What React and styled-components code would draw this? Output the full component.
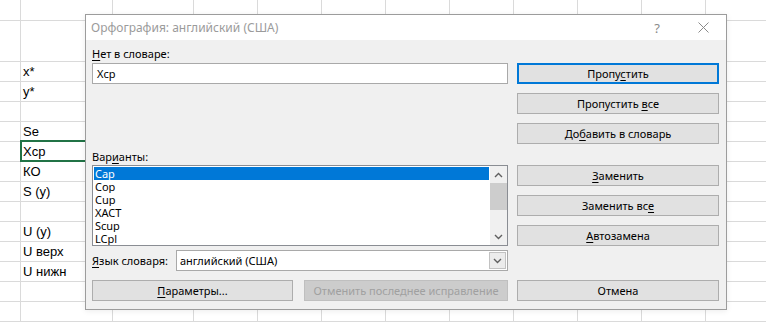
import React from "react";
import styled, { createGlobalStyle, css } from "styled-components";

const Global = createGlobalStyle`
  html, body { margin: 0; padding: 0; background: #fff; }
  body { width: 766px; height: 322px; overflow: hidden; }
`;

const Stage = styled.div`
  position: relative;
  width: 766px;
  height: 322px;
  overflow: hidden;
  background: #fff;
`;

const Sheet = styled.div`
  display: grid;
  grid-template-columns: 21px 92px 81px repeat(9, 64px);
  grid-template-rows: 21px 41px repeat(13, 20px);
  font-family: "Liberation Sans", Arial, sans-serif;
  font-size: 13px;
  color: #000;
`;

const Cell = styled.div`
  box-sizing: border-box;
  border-right: 1px solid #dadada;
  border-bottom: 1px solid #dadada;
  display: flex;
  align-items: flex-end;
  padding: 0 0 2px 2px;
  white-space: nowrap;
  position: relative;
  ${(p) =>
    p.$selected &&
    css`
      &::after {
        content: "";
        position: absolute;
        left: -1px;
        top: -2px;
        right: -2px;
        bottom: -1px;
        border: 2px solid #217346;
      }
    `}
`;

const Dialog = styled.div`
  position: absolute;
  left: 85px;
  top: 14px;
  width: 642px;
  height: 296px;
  box-sizing: border-box;
  border: 1px solid #9c9c9c;
  background: #f0f0f0;
  display: flex;
  flex-direction: column;
  font-family: "Noto Sans", "Segoe UI", sans-serif;
  font-size: 11px;
  color: #000;
  box-shadow: 0 1px 6px rgba(0, 0, 0, 0.08);
`;

const TitleBar = styled.div`
  height: 25px;
  flex: none;
  background: #fff;
  display: flex;
  align-items: center;
  padding-left: 5px;
  color: #9b9b9b;
  font-size: 12px;
`;

const TitleText = styled.div`
  flex: 1;
`;

const TitleButton = styled.div`
  width: 46px;
  height: 25px;
  display: flex;
  align-items: center;
  justify-content: center;
  color: #8a8a8a;
  font-size: 13px;
`;

const Body = styled.div`
  flex: 1;
  display: grid;
  grid-template-columns: 416px 202px;
  column-gap: 9px;
  padding: 6px 7px 0 6px;
`;

const Column = styled.div`
  display: flex;
  flex-direction: column;
`;

const Label = styled.div`
  line-height: ${(p) => p.$lh || 15}px;
  height: ${(p) => p.$lh || 15}px;
  margin-top: ${(p) => p.$mt || 0}px;
  margin-bottom: ${(p) => p.$mb || 0}px;
  white-space: nowrap;
`;

const Key = styled.span`
  text-decoration: underline;
  text-underline-offset: 2px;
`;

const TextField = styled.div`
  height: 21px;
  box-sizing: border-box;
  border: 1px solid #a9a9a9;
  background: #fff;
  display: flex;
  align-items: center;
  padding-left: 4px;
`;

const ListBox = styled.div`
  margin-top: 1px;
  height: 81px;
  box-sizing: border-box;
  border: 1px solid #8a8d93;
  background: #fff;
  display: flex;
`;

const Items = styled.div`
  flex: 1;
  padding: 1px 1px 0 1px;
  display: flex;
  flex-direction: column;
`;

const Item = styled.div`
  height: 13px;
  line-height: 13px;
  padding-left: 1px;
  white-space: nowrap;
  overflow: hidden;
  ${(p) =>
    p.$active &&
    css`
      background: #0078d7;
      color: #fff;
    `}
`;

const ScrollBar = styled.div`
  width: 17px;
  background: #f0f0f0;
  display: flex;
  flex-direction: column;
`;

const ScrollArrow = styled.div`
  height: 17px;
  display: flex;
  align-items: center;
  justify-content: center;
`;

const Thumb = styled.div`
  height: 27px;
  background: #cdcdcd;
`;

const ScrollTrack = styled.div`
  flex: 1;
`;

const LangRow = styled.div`
  margin-top: 4px;
  height: 21px;
  display: flex;
  align-items: center;
`;

const LangLabel = styled.div`
  width: 84px;
  white-space: nowrap;
`;

const Select = styled.div`
  flex: 1;
  height: 21px;
  box-sizing: border-box;
  border: 1px solid #a9a9a9;
  background: #fff;
  display: flex;
  align-items: stretch;
`;

const SelectValue = styled.div`
  flex: 1;
  display: flex;
  align-items: center;
  padding-left: 3px;
`;

const SelectToggle = styled.div`
  width: 17px;
  box-sizing: border-box;
  border: 1px solid #c2c2c2;
  margin: 1px;
  background: #ececec;
  display: flex;
  align-items: center;
  justify-content: center;
`;

const BottomRow = styled.div`
  margin-top: 9px;
  display: flex;
  gap: 11px;
`;

const Button = styled.div`
  height: 21px;
  width: ${(p) => (p.$w ? `${p.$w}px` : "auto")};
  margin-top: ${(p) => p.$mt || 0}px;
  box-sizing: border-box;
  border: 1px solid #adadad;
  background: #e1e1e1;
  display: flex;
  align-items: center;
  justify-content: center;
  white-space: nowrap;
  ${(p) =>
    p.$default &&
    css`
      border: 2px solid #0078d7;
    `}
  ${(p) =>
    p.$disabled &&
    css`
      background: #cccccc;
      border-color: #bfbfbf;
      color: #a0a0a0;
    `}
`;

const Caption = styled.span`
  white-space: pre;
`;

const Chevron = ({ up }) => (
  <svg width="9" height="6" viewBox="0 0 9 6">
    <path
      d={up ? "M1 5 L4.5 1.5 L8 5" : "M1 1 L4.5 4.5 L8 1"}
      fill="none"
      stroke="#606060"
      strokeWidth="1.4"
    />
  </svg>
);

const rows = [
  "",
  "",
  "x*",
  "y*",
  "",
  "Se",
  "Xcp",
  "КО",
  "S (y)",
  "",
  "U (y)",
  "U верх",
  "U нижн",
  "",
  "",
];

const variants = ["Cap", "Cop", "Cup", "XACT", "Scup", "LCpl"];

export default function App() {
  return (
    <Stage>
      <Global />
      <Sheet>
        {rows.map((label, r) =>
          Array.from({ length: 12 }).map((_, c) => (
            <Cell key={`${r}-${c}`} $selected={r === 6 && c === 1}>
              {c === 1 ? label : ""}
            </Cell>
          ))
        )}
      </Sheet>

      <Dialog>
        <TitleBar>
          <TitleText>Орфография: английский (США)</TitleText>
          <TitleButton>?</TitleButton>
          <TitleButton>
            <svg width="11" height="11" viewBox="0 0 11 11">
              <path d="M0.5 0.5 L10.5 10.5 M10.5 0.5 L0.5 10.5" stroke="#8a8a8a" strokeWidth="1" />
            </svg>
          </TitleButton>
        </TitleBar>
        <Body>
          <Column>
            <Label $mb={2}>
              <Key>Н</Key>ет в словаре:
            </Label>
            <TextField>Xcp</TextField>
            <Label $mt={66} $lh={14}>
              Вар<Key>и</Key>анты:
            </Label>
            <ListBox>
              <Items>
                {variants.map((v, i) => (
                  <Item key={v} $active={i === 0}>
                    {v}
                  </Item>
                ))}
              </Items>
              <ScrollBar>
                <ScrollArrow>
                  <Chevron up />
                </ScrollArrow>
                <Thumb />
                <ScrollTrack />
                <ScrollArrow>
                  <Chevron />
                </ScrollArrow>
              </ScrollBar>
            </ListBox>
            <LangRow>
              <LangLabel>
                <Key>Я</Key>зык словаря:
              </LangLabel>
              <Select>
                <SelectValue>английский (США)</SelectValue>
                <SelectToggle>
                  <Chevron />
                </SelectToggle>
              </Select>
            </LangRow>
            <BottomRow>
              <Button $w={201}>
                <Caption>
                  <Key>П</Key>араметры...
                </Caption>
              </Button>
              <Button $w={204} $disabled>
                <Caption>Отменить последнее исправление</Caption>
              </Button>
            </BottomRow>
          </Column>
          <Column>
            <Button $mt={17} $default>
              <Caption>
                Пропу<Key>с</Key>тить
              </Caption>
            </Button>
            <Button $mt={9}>
              <Caption>
                {"Пропустить "}
                <Key>в</Key>се
              </Caption>
            </Button>
            <Button $mt={9}>
              <Caption>
                До<Key>б</Key>авить в словарь
              </Caption>
            </Button>
            <Button $mt={21}>
              <Caption>
                <Key>З</Key>аменить
              </Caption>
            </Button>
            <Button $mt={9}>
              <Caption>
                Заменить вс<Key>е</Key>
              </Caption>
            </Button>
            <Button $mt={9}>
              <Caption>
                <Key>А</Key>втозамена
              </Caption>
            </Button>
            <Button $mt={34}>
              <Caption>Отмена</Caption>
            </Button>
          </Column>
        </Body>
      </Dialog>
    </Stage>
  );
}
